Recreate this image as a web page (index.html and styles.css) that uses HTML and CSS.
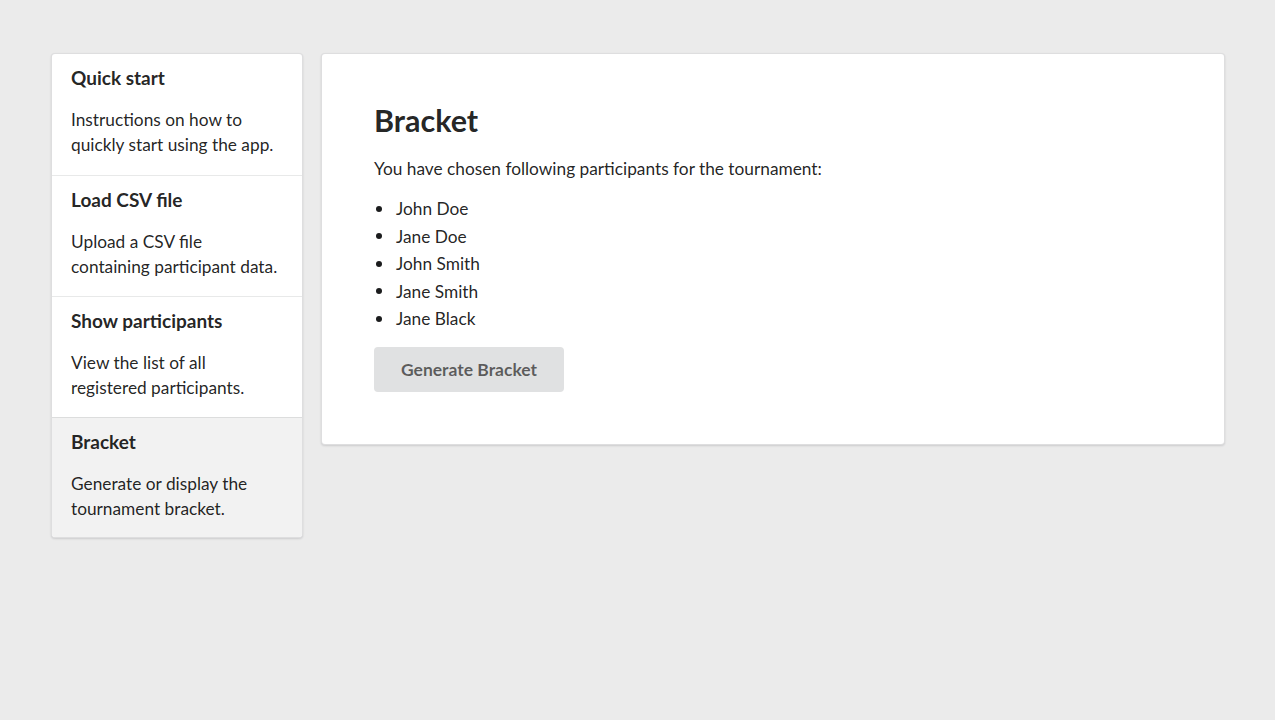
FILE: index.html
```html
<!DOCTYPE html>
<html>
<head>
<meta charset="utf-8">
<link rel="stylesheet" href="styles.css">
</head>
<body>
<div class="layout">
  <nav class="menu">
    <a class="item">
      <div class="item-header">Quick start</div>
      <p class="item-desc">Instructions on how to quickly start using the app.</p>
    </a>
    <a class="item">
      <div class="item-header">Load CSV file</div>
      <p class="item-desc">Upload a CSV file containing participant data.</p>
    </a>
    <a class="item">
      <div class="item-header">Show participants</div>
      <p class="item-desc">View the list of all registered participants.</p>
    </a>
    <a class="item active">
      <div class="item-header">Bracket</div>
      <p class="item-desc">Generate or display the tournament bracket.</p>
    </a>
  </nav>
  <main class="segment">
    <h1 class="title">Bracket</h1>
    <p class="intro">You have chosen following participants for the tournament:</p>
    <ul class="list">
      <li>John Doe</li>
      <li>Jane Doe</li>
      <li>John Smith</li>
      <li>Jane Smith</li>
      <li>Jane Black</li>
    </ul>
    <button class="button">Generate Bracket</button>
  </main>
</div>
</body>
</html>
```
FILE: styles.css
```css
html, body {
  margin: 0;
  padding: 0;
}
body {
  background: #ebebeb;
  font-family: Lato, "Open Sans", sans-serif;
  color: rgba(0,0,0,0.87);
  font-size: 17.3px;
}
.layout {
  display: flex;
  align-items: flex-start;
  gap: 18px;
  padding: 53px 50px 53px 51px;
}
.menu {
  width: 252px;
  flex: none;
  box-sizing: border-box;
  background: #fff;
  border: 1px solid rgba(34,36,38,0.15);
  border-radius: 4px;
  box-shadow: 0 1px 2px 0 rgba(34,36,38,0.15);
  overflow: hidden;
  display: flex;
  flex-direction: column;
}
.item {
  display: block;
  height: 121px;
  box-sizing: border-box;
  padding: 13px 19px 0;
  border-top: 1px solid rgba(34,36,38,0.1);
  cursor: pointer;
}
.item:first-child {
  border-top: none;
}
.item:last-child {
  height: 120px;
}
.item.active {
  background: #f2f2f2;
}
.item-header {
  font-weight: 700;
  font-size: 19px;
  line-height: 22px;
  color: rgba(0,0,0,0.87);
}
.item-desc {
  margin: 18px 0 0;
  font-size: 17.3px;
  line-height: 25px;
  color: rgba(0,0,0,0.87);
}
.segment {
  flex: 1;
  box-sizing: border-box;
  background: #fff;
  border: 1px solid rgba(34,36,38,0.15);
  border-radius: 4px;
  box-shadow: 0 1px 2px 0 rgba(34,36,38,0.15);
  padding: 39px 52px 52px;
}
.title {
  margin: 0 0 9px;
  font-size: 30.5px;
  font-weight: 700;
  line-height: 54px;
  color: rgba(0,0,0,0.87);
}
.intro {
  margin: 0 0 14px;
  font-size: 17.3px;
  line-height: 25px;
}
.list {
  list-style: none;
  margin: 0 0 14px;
  padding: 0 0 0 2px;
  font-size: 17.3px;
}
.list li {
  line-height: 27.5px;
  display: flex;
  align-items: center;
  gap: 14px;
}
.list li::before {
  content: "";
  width: 6px;
  height: 6px;
  border-radius: 50%;
  background: #1b1c1d;
  flex: none;
}
.button {
  display: block;
  width: 190px;
  height: 45px;
  border: none;
  border-radius: 4px;
  background: #e0e1e2;
  color: rgba(0,0,0,0.6);
  font-family: Lato, "Open Sans", sans-serif;
  font-weight: 700;
  font-size: 17.5px;
  padding: 0;
  cursor: pointer;
}
```
